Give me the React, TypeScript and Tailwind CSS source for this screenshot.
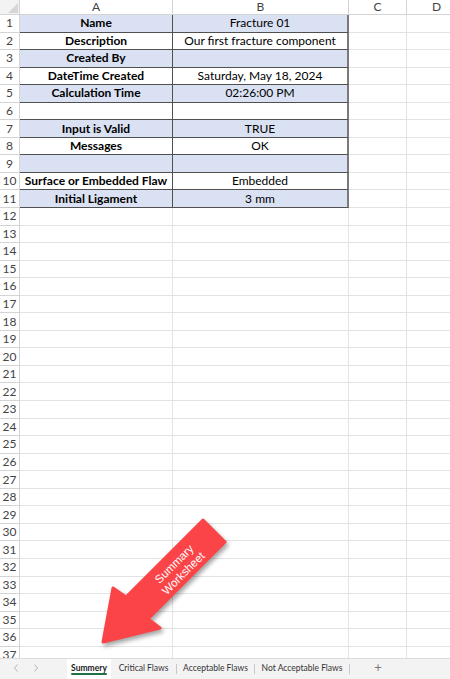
import React from "react";

const summary: [string, string][] = [
  ["Name", "Fracture 01"],
  ["Description", "Our first fracture component"],
  ["Created By", ""],
  ["DateTime Created", "Saturday, May 18, 2024"],
  ["Calculation Time", "02:26:00 PM"],
  ["", ""],
  ["Input is Valid", "TRUE"],
  ["Messages", "OK"],
  ["", ""],
  ["Surface or Embedded Flaw", "Embedded"],
  ["Initial Ligament", "3 mm"],
];

const filled = [0, 2, 4, 6, 8, 10];

function Row({ n }: { n: number }) {
  const item = summary[n - 1];
  const inTable = !!item;
  const blue = inTable && filled.includes(n - 1);
  return (
    <div className="flex h-[17.55px] shrink-0">
      <div className="flex w-[20px] shrink-0 items-center justify-center border-r border-b border-[#d4d4d4] bg-white text-[12px] text-[#444]">
        {n}
      </div>
      {inTable ? (
        <>
          <div
            className={`flex w-[153px] shrink-0 items-center justify-center border-r border-b border-[#505050] text-[12px] font-bold text-black ${
              blue ? "bg-[#d9e1f2]" : "bg-white"
            }`}
          >
            {item[0]}
          </div>
          <div
            className={`flex w-[176px] shrink-0 items-center justify-center border-b border-b-[#505050] border-r-2 border-r-[#7a7a7a] text-[12px] text-black ${
              blue ? "bg-[#d9e1f2]" : "bg-white"
            }`}
          >
            {item[1]}
          </div>
        </>
      ) : (
        <>
          <div className="w-[153px] shrink-0 border-r border-b border-[#e3e3e3]" />
          <div className="w-[176px] shrink-0 border-r border-b border-[#e3e3e3]" />
        </>
      )}
      <div className="w-[58px] shrink-0 border-r border-b border-[#e3e3e3]" />
      <div className="w-[60px] shrink-0 border-r border-b border-[#e3e3e3]" />
    </div>
  );
}

function Arrow() {
  return (
    <>
      <svg
        className="pointer-events-none absolute left-0 top-0"
        width="450"
        height="679"
        style={{ filter: "drop-shadow(2px 3px 2px rgba(0,0,0,0.35))" }}
      >
        <polygon
          points="203,520 225,542 148,619 160,628 103,642 113,588 126,597"
          fill="#fb4447"
          stroke="#fb4447"
          strokeWidth="3"
          strokeLinejoin="round"
        />
      </svg>
      <div className="pointer-events-none absolute left-[179px] top-[569px] -translate-x-1/2 -translate-y-1/2 rotate-[-45deg] text-center font-['Liberation_Sans',Arial,sans-serif] text-[11.5px] leading-[13px] text-white">
        Summary
        <br />
        Worksheet
      </div>
    </>
  );
}

function Chevron({ dir }: { dir: "left" | "right" }) {
  return (
    <svg width="6" height="8" viewBox="0 0 6 8" fill="none" stroke="#b4b4b4" strokeWidth="1">
      {dir === "left" ? <path d="M4.5 0.5 L1.5 4 L4.5 7.5" /> : <path d="M1.5 0.5 L4.5 4 L1.5 7.5" />}
    </svg>
  );
}

export default function App() {
  const rows = Array.from({ length: 37 }, (_, i) => i + 1);
  return (
    <div className="relative h-[679px] w-[450px] overflow-hidden bg-white font-['Lato','Open_Sans',sans-serif]">
      <div className="h-[658px] overflow-hidden">
        {/* column header */}
        <div className="flex h-[15px]">
          <div className="relative w-[20px] shrink-0 border-r border-b border-[#d4d4d4] bg-[#f3f3f3]">
            <svg className="absolute bottom-[1px] right-[1px]" width="10" height="10">
              <polygon points="10,0 10,10 0,10" fill="#d6d6d6" />
            </svg>
          </div>
          {[
            ["A", "w-[153px]"],
            ["B", "w-[176px]"],
            ["C", "w-[58px]"],
            ["D", "w-[60px]"],
          ].map(([l, w]) => (
            <div
              key={l}
              className={`${w} flex shrink-0 items-center justify-center border-r border-b border-[#d4d4d4] bg-white text-[12px] leading-none text-[#444]`}
            >
              {l}
            </div>
          ))}
        </div>
        {rows.map((n) => (
          <Row key={n} n={n} />
        ))}
      </div>

      {/* sheet tabs */}
      <div className="flex h-[21px] items-stretch border-t border-[#dcdcdc] bg-[#f3f3f3] text-[8.5px] text-[#333]">
        <div className="flex w-[67px] items-center gap-[14px] pb-[2px] pl-[13px]">
          <Chevron dir="left" />
          <Chevron dir="right" />
        </div>
        <div className="relative flex w-[44px] items-center justify-center bg-white pb-[2px] font-bold text-[#222]">
          Summery
          <div className="absolute bottom-[4px] left-[4px] right-[4px] h-[2px] rounded bg-[#1e7145]" />
        </div>
        <div className="flex w-[65px] items-center justify-center pb-[2px]">Critical Flaws</div>
        <div className="my-[5px] w-px bg-[#c8c8c8]" />
        <div className="flex w-[77px] items-center justify-center pb-[2px]">Acceptable Flaws</div>
        <div className="my-[5px] w-px bg-[#c8c8c8]" />
        <div className="flex w-[94px] items-center justify-center pb-[2px]">Not Acceptable Flaws</div>
        <div className="my-[5px] w-px bg-[#c8c8c8]" />
        <div className="flex w-[56px] items-center justify-center pb-[2px] text-[13px] text-[#777]">+</div>
      </div>

      <Arrow />
    </div>
  );
}
